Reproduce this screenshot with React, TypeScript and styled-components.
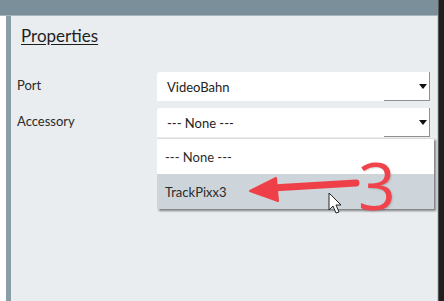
import styled, { createGlobalStyle } from "styled-components";

const Global = createGlobalStyle`
  html, body { margin: 0; padding: 0; background: #fff; }
  body { font-family: Lato, "Open Sans", sans-serif; overflow: hidden; }
`;

const Frame = styled.div`
  position: relative;
  display: flex;
  width: 444px;
  height: 301px;
`;

const Main = styled.div`
  flex: 1;
  display: flex;
  flex-direction: column;
`;

const TopBar = styled.div`
  height: 15px;
  background: #7a8f9a;
  border-bottom: 1px solid #a7b5bc;
`;

const Body = styled.div`
  flex: 1;
  display: flex;
  background: #fff;
  padding-left: 6px;
`;

const SideRail = styled.div`
  width: 5px;
  background: #8b9da6;
`;

const Panel = styled.div`
  position: relative;
  flex: 1;
  background: #e9edf0;
  padding: 9px 7px 0 6px;
  border-right: 1px solid #c9cfd3;
`;

const DarkEdge = styled.div`
  width: 5px;
  background: #1f1f1f;
  border-left: 1px solid #555;
`;

const Title = styled.h2`
  margin: 0 0 0 4px;
  font-size: 17px;
  font-weight: 400;
  color: #1e1e1e;
  text-decoration: underline;
  text-underline-offset: 2px;
  line-height: 22px;
`;

const Rows = styled.div`
  display: flex;
  flex-direction: column;
  gap: 7px;
  margin-top: 25px;
`;

const Row = styled.div`
  position: relative;
  display: grid;
  grid-template-columns: 140px 1fr;
  align-items: center;
`;

const Label = styled.span`
  font-size: 13px;
  color: #2a2a2a;
  margin-top: -4px;
`;

const Select = styled.div`
  display: flex;
  align-items: stretch;
  height: 29px;
  background: #fff;
  border-radius: 3px 0 0 0;
`;

const Value = styled.span`
  flex: 1;
  display: flex;
  align-items: center;
  padding-left: 10px;
  font-size: 13px;
  color: #222;
`;

const DropButton = styled.span`
  width: 46px;
  display: flex;
  align-items: center;
  justify-content: flex-end;
  padding-right: 2px;
  box-sizing: border-box;
  border-right: 1px solid #8f8f8f;
  border-bottom: 1px solid #8f8f8f;
`;

const Caret = styled.span`
  width: 0;
  height: 0;
  border-left: 4px solid transparent;
  border-right: 4px solid transparent;
  border-top: 5px solid #111;
`;

const Menu = styled.div`
  position: absolute;
  left: 140px;
  right: -4px;
  top: 30px;
  background: #fff;
  box-shadow: 2px 2px 2px rgba(0, 0, 0, 0.45);
  border-top: 1px solid #dcdcdc;
`;

const Option = styled.div<{ $hover?: boolean }>`
  height: 35px;
  display: flex;
  align-items: center;
  padding-left: 8px;
  font-size: 13px;
  color: #2b2b2b;
  background: ${(p) => (p.$hover ? "#cdd5da" : "#fff")};
`;

const Annotation = styled.svg`
  position: absolute;
  left: 0;
  top: 0;
  pointer-events: none;
`;

const Step = styled.span`
  position: absolute;
  left: 358px;
  top: 151px;
  font-family: "Open Sans", "Liberation Sans", sans-serif;
  font-size: 66px;
  font-weight: 500;
  line-height: 66px;
  color: #f0434b;
  text-shadow: 1px 1px 2px rgba(0, 0, 0, 0.15);
`;

const Field = ({ value }: { value: string }) => (
  <Select>
    <Value>{value}</Value>
    <DropButton>
      <Caret />
    </DropButton>
  </Select>
);

export default function App() {
  return (
    <>
      <Global />
      <Frame>
        <Main>
          <TopBar />
          <Body>
            <SideRail />
            <Panel>
              <Title>Properties</Title>
              <Rows>
                <Row>
                  <Label>Port</Label>
                  <Field value="VideoBahn" />
                </Row>
                <Row>
                  <Label>Accessory</Label>
                  <Field value="--- None ---" />
                  <Menu>
                    <Option>--- None ---</Option>
                    <Option $hover>TrackPixx3</Option>
                  </Menu>
                </Row>
              </Rows>
            </Panel>
          </Body>
        </Main>
        <DarkEdge />
        <Annotation width="444" height="301" viewBox="0 0 444 301">
          <path d="M356 183 L272 188" stroke="#ef4049" strokeWidth="7" strokeLinecap="round" />
          <path d="M250 191 L276 178 L278 201 Z" fill="#ef4049" stroke="#ef4049" strokeWidth="2" strokeLinejoin="round" />
          <path
            d="M329 193 L329 210 L333 206 L336 213 L339 212 L336 205 L341 205 Z"
            fill="#fff"
            stroke="#222"
            strokeWidth="1"
            strokeLinejoin="round"
          />
        </Annotation>
        <Step>3</Step>
      </Frame>
    </>
  );
}
